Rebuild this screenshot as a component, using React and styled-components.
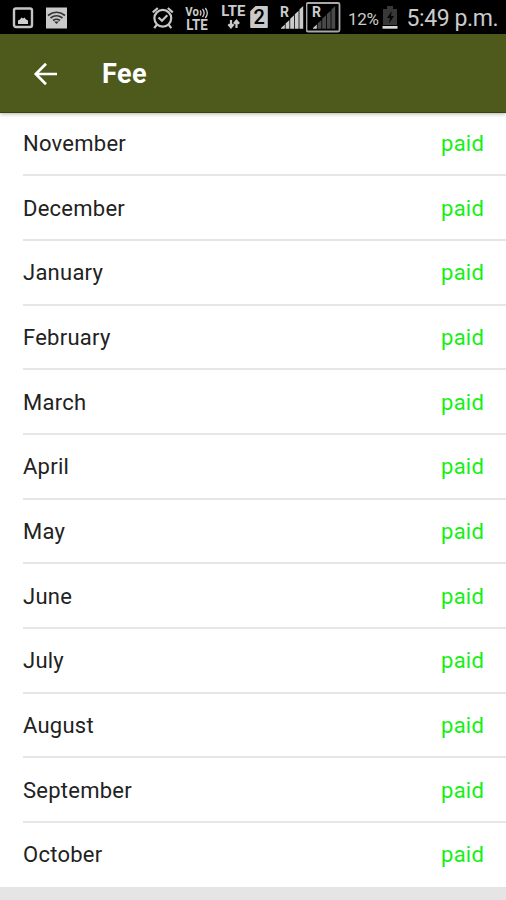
import React from 'react';
import styled, { createGlobalStyle } from 'styled-components';

const GlobalStyle = createGlobalStyle`
  * {
    box-sizing: border-box;
  }

  body {
    margin: 0;
    background: #fff;
    font-family: Roboto, "Liberation Sans", sans-serif;
  }
`;

const Screen = styled.div`
  display: flex;
  flex-direction: column;
  width: 506px;
  height: 900px;
  overflow: hidden;
  background: #e5e5e5;
`;

const StatusBar = styled.div`
  display: flex;
  flex: none;
  height: 34px;
  padding-left: 12px;
  background: #000;
  color: #cbcbcb;
`;

const StatusIcon = styled.svg`
  display: block;
  flex: none;
  width: ${props => props.$width}px;
  height: 34px;
  margin-left: ${props => props.$gap || 0}px;
  font-family: Roboto, sans-serif;
`;

const StatusText = styled.span`
  flex: none;
  width: ${props => props.$width}px;
  margin-left: ${props => props.$gap}px;
  font-size: ${props => props.$size}px;
  letter-spacing: ${props => props.$spacing || 0}px;
  line-height: 38px;
  white-space: nowrap;
`;

const Header = styled.header`
  display: flex;
  flex: none;
  align-items: center;
  position: relative;
  z-index: 1;
  height: 79px;
  padding: 2px 0 0 33px;
  background: #4e5a1c;
  border-bottom: 1px solid #39430f;
  box-shadow: 0 1px 4px rgba(0, 0, 0, 0.3);
`;

const BackButton = styled.button`
  all: unset;
  display: flex;
  width: 69px;
  cursor: pointer;
`;

const Title = styled.h1`
  margin: 0;
  color: #fff;
  font-size: 27px;
  font-weight: 700;
  letter-spacing: 0.4px;
  line-height: 32px;
`;

const List = styled.ul`
  flex: none;
  margin: -1.4px 0 0;
  padding: 0 0 0 23px;
  background: #fff;
  list-style: none;
`;

const Row = styled.li`
  display: flex;
  align-items: center;
  justify-content: space-between;
  height: 64.68px;
  padding-right: 22px;
  border-bottom: 2px solid #e6e6e6;
  font-size: 22px;

  &:last-child {
    height: 64px;
    border-bottom: 0;
    padding-bottom: 2px;
  }
`;

const Month = styled.span`
  padding-top: 1px;
  color: #222;
  letter-spacing: 0.25px;
`;

const Status = styled.span`
  padding-top: 1px;
  color: #14f014;
  letter-spacing: 0.2px;
`;

const months = [
  'November',
  'December',
  'January',
  'February',
  'March',
  'April',
  'May',
  'June',
  'July',
  'August',
  'September',
  'October'
];

const PictureIcon = () => (
  <StatusIcon $width={22} viewBox="0 0 22 34">
    <rect x="2" y="8.5" width="18" height="18.5" rx="2" fill="none" stroke="#c4c4c4" strokeWidth="2.4" />
    <path d="M6 24v-3.5l2-1 1.5-2 1.5 1 1.5-1 1.5 2 2 1V24z" fill="#d0d0d0" />
  </StatusIcon>
);

const WifiIcon = () => (
  <StatusIcon $width={21} $gap={12} viewBox="0 0 21 34">
    <rect y="7.5" width="21" height="21" fill="#c9c9c9" />
    <g fill="none" stroke="#333" strokeWidth="1.7">
      <path d="M2 15.5q8.5-6.5 17 0" />
      <path d="M4.5 18q6-4.5 12 0" />
      <path d="M7 20.5q3.5-2.5 7 0" />
    </g>
    <path d="M8 21.5h5l-2.5 2.5z" fill="#333" />
  </StatusIcon>
);

const AlarmIcon = () => (
  <StatusIcon $width={22} $gap={85} viewBox="0 0 22 34">
    <g fill="none" stroke="#c7c7c7" strokeWidth="2.2">
      <circle cx="10.8" cy="18.3" r="8.4" />
      <path d="M.8 12.3l5-4.3M20.8 12.3l-5-4.3M5 24.5l-2.8 3.7M16.5 24.5l2.8 3.7M6.5 17.5l3.5 3.3 5.3-5.5" />
    </g>
  </StatusIcon>
);

const VolteIcon = () => (
  <StatusIcon $width={25} $gap={11} viewBox="0 0 25 34">
    <g fill="#cbcbcb" fontWeight="700">
      <text x="0.3" y="16.3" fontSize="12" textLength="13.5" lengthAdjust="spacingAndGlyphs">Vo</text>
      <text x="1.3" y="29.5" fontSize="14" textLength="21.5" lengthAdjust="spacingAndGlyphs">LTE</text>
    </g>
    <path d="M15 10.5q2 2.5 0 5M17.5 9q3.3 4 0 8M20.3 8q4 5 0 10" fill="none" stroke="#cbcbcb" strokeWidth="1.3" />
  </StatusIcon>
);

const LteDataIcon = () => (
  <StatusIcon $width={25} $gap={11} viewBox="0 0 25 34">
    <text x="0.3" y="16" fontSize="14.5" fontWeight="700" fill="#cbcbcb" textLength="24" lengthAdjust="spacingAndGlyphs">LTE</text>
    <path d="M10 20v7M7.4 24.2l2.6 3 2.6-3M15.5 28v-7M12.9 23.8l2.6-3 2.6 3" fill="none" stroke="#cbcbcb" strokeWidth="2.2" />
  </StatusIcon>
);

const SimIcon = () => (
  <StatusIcon $width={19} $gap={4} viewBox="0 0 19 34">
    <path d="M5.5 6H17q.8 0 .8.8v20.4q0 .8-.8.8H1q-.8 0-.8-.8V11.3z" fill="#c9c9c9" />
    <text x="9.2" y="24" fontSize="20" fontWeight="500" fill="#000" textAnchor="middle">2</text>
  </StatusIcon>
);

const bars = [0, 1, 2, 3, 4];

const SignalIcon = ({ active, boxed, width, gap }) => {
  const left = boxed ? 7 : 1;

  return (
    <StatusIcon $width={width} $gap={gap} viewBox={`0 0 ${width} 34`}>
      {boxed && (
        <rect x="0.5" y="3" width="33" height="28.5" rx="1.5" fill="none" stroke="#aaa" strokeWidth="1.8" />
      )}
      <text x={left - 0.9} y="16.5" fontSize="14" fontWeight="700" fill="#cbcbcb">R</text>
      {bars.map(bar => {
        const x = left + bar * 4.6;
        const top = 24.5 - bar * 4.6;

        return (
          <path
            key={bar}
            d={`M${x} 28.7V${top + 3.5}L${x + 3.8} ${top}V28.7z`}
            fill={bar < active ? '#cbcbcb' : '#494949'}
          />
        );
      })}
    </StatusIcon>
  );
};

const BatteryIcon = () => (
  <StatusIcon $width={17} $gap={1} viewBox="0 0 17 34">
    <path d="M5 6h6v3h4v16H1V9h4z" fill="#383838" />
    <path d="M9.8 11L5 18h3l-1 5.5 5-7.5H9z" fill="#050505" />
    <path d="M.5 26h15v2.7H.5z" fill="#d8d8d8" />
  </StatusIcon>
);

const ArrowIcon = () => (
  <svg width="26" height="26" viewBox="0 0 26 26">
    <path d="M13 2.8L2.8 13 13 23.2M3 13h21" fill="none" stroke="#fff" strokeWidth="2.7" />
  </svg>
);

const FeeRow = ({ month }) => (
  <Row>
    <Month>{month}</Month>
    <Status>paid</Status>
  </Row>
);

const App = () => (
  <>
    <GlobalStyle />
    <Screen>
      <StatusBar>
        <PictureIcon />
        <WifiIcon />
        <AlarmIcon />
        <VolteIcon />
        <LteDataIcon />
        <SimIcon />
        <SignalIcon active={5} width={25} gap={11} />
        <SignalIcon active={1} width={35} gap={1} boxed />
        <StatusText $width={33} $gap={7} $size={17} $spacing={-0.3}>12%</StatusText>
        <BatteryIcon />
        <StatusText $width={92} $gap={7.5} $size={23} $spacing={-0.4}>5:49 p.m.</StatusText>
      </StatusBar>
      <Header>
        <BackButton aria-label="Back">
          <ArrowIcon />
        </BackButton>
        <Title>Fee</Title>
      </Header>
      <List>
        {months.map(month => (
          <FeeRow key={month} month={month} />
        ))}
      </List>
    </Screen>
  </>
);

export default App;
